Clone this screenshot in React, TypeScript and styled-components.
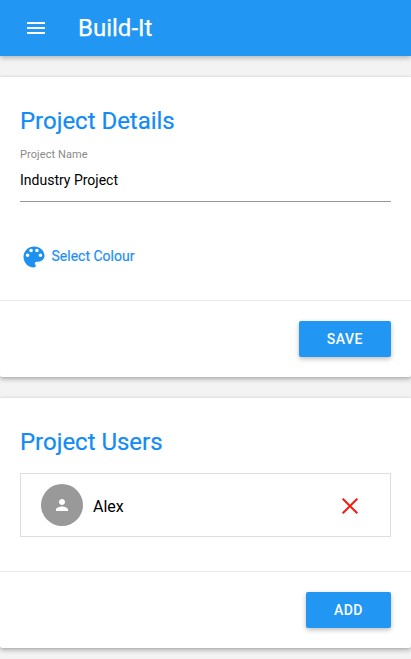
import React from "react";
import styled, { createGlobalStyle } from "styled-components";

const GlobalStyle = createGlobalStyle`
  * { box-sizing: border-box; }
  body {
    margin: 0;
    background: #f3f3f3;
    font-family: Roboto, "Liberation Sans", sans-serif;
    color: #000;
    overflow: hidden;
  }
`;

const Page = styled.div`
  display: flex;
  flex-direction: column;
  gap: 21px;
  height: 659px;
`;

const AppBar = styled.header`
  display: flex;
  align-items: center;
  flex: none;
  gap: 30px;
  height: 56px;
  padding-left: 24px;
  background: #2196f3;
  color: #fff;
  box-shadow: 0 2px 5px rgba(0, 0, 0, 0.26);
`;

const AppTitle = styled.h1`
  margin: 0;
  font-size: 24px;
  line-height: 32px;
  font-weight: 400;
  -webkit-text-stroke: 0.25px currentColor;
`;

const Card = styled.section<{ $height: number }>`
  display: flex;
  flex-direction: column;
  flex: none;
  height: ${(p) => p.$height}px;
  background: #fff;
  border-radius: 0 0 2px 2px;
  box-shadow: 0 2px 5px rgba(0, 0, 0, 0.3), 0 0 2px rgba(0, 0, 0, 0.1);
`;

const CardBody = styled.div`
  flex: 1;
  padding: 28px 20px 0;
`;

const Heading = styled.h2`
  margin: 0;
  font-size: 24px;
  line-height: 32px;
  font-weight: 400;
  letter-spacing: -0.02px;
  color: #118bf5;
  -webkit-text-stroke: 0.2px currentColor;
`;

const Field = styled.label`
  display: block;
  margin-top: 11px;
`;

const FieldLabel = styled.span`
  display: block;
  font-size: 11px;
  line-height: 14px;
  letter-spacing: 0.08px;
  color: #8a8a8a;
`;

const FieldInput = styled.input`
  display: block;
  width: 100%;
  height: 40px;
  padding: 0 0 3px;
  border: 0;
  border-bottom: 1px solid #969696;
  outline: 0;
  background: none;
  font: 400 14px/20px Roboto, sans-serif;
  color: #000;
`;

const ColourButton = styled.button`
  display: flex;
  align-items: center;
  gap: 3.500px;
  height: 28px;
  margin-top: 41px;
  padding: 0;
  border: 0;
  background: none;
  color: #1e90f0;
  font: 400 14px/20px Roboto, sans-serif;
`;

const ColourLabel = styled.span`
  padding-bottom: 2px;
  -webkit-text-stroke: 0.2px currentColor;
`;

const UserRow = styled.div`
  display: flex;
  align-items: center;
  height: 64px;
  margin-top: 15px;
  padding: 0 29px 0 20px;
  border: 1px solid #dedede;
`;

const Avatar = styled.span`
  display: flex;
  align-items: center;
  justify-content: center;
  width: 42px;
  height: 42px;
  border-radius: 50%;
  background: #999;
  color: #fff;
`;

const UserName = styled.span`
  flex: 1;
  margin-left: 10px;
  padding-top: 3px;
  font-size: 16px;
  line-height: 22px;
`;

const RemoveButton = styled.button`
  display: flex;
  padding: 0;
  margin-top: 2px;
  border: 0;
  background: none;
  color: #f51a10;
`;

const CardActions = styled.footer`
  display: flex;
  justify-content: flex-end;
  height: 77px;
  padding: 20px 20px 0;
  border-top: 1px solid #e8e8e8;
`;

const ActionButton = styled.button`
  height: 36px;
  padding: 0 28px;
  border: 0;
  border-radius: 2px;
  background: #2196f3;
  color: #fff;
  font: 500 14px/36px Roboto, sans-serif;
  letter-spacing: 0.5px;
  box-shadow: 0 2px 5px rgba(0, 0, 0, 0.26);
`;

const Icon = styled.svg<{ $size: number }>`
  display: block;
  flex: none;
  width: ${(p) => p.$size}px;
  height: ${(p) => p.$size}px;
  fill: currentColor;
`;

const StrokeIcon = styled(Icon)`
  fill: none;
  stroke: currentColor;
  stroke-width: 2;
`;

export default function App() {
  return (
    <>
      <GlobalStyle />
      <Page>
        <AppBar>
          <Icon $size={24} viewBox="0 0 24 24">
            <path d="M3 18h18v-2H3v2zm0-5h18v-2H3v2zm0-7v2h18V6H3z" />
          </Icon>
          <AppTitle>Build-It</AppTitle>
        </AppBar>

        <Card $height={300}>
          <CardBody>
            <Heading>Project Details</Heading>
            <Field>
              <FieldLabel>Project Name</FieldLabel>
              <FieldInput defaultValue="Industry Project" />
            </Field>
            <ColourButton>
              <Icon $size={28} viewBox="0 0 24 24">
                <path d="M12 3c-4.970 0-9 4.030-9 9s4.030 9 9 9c.83 0 1.500-.67 1.500-1.500 0-.39-.15-.74-.39-1.010-.23-.26-.38-.61-.38-.99 0-.83.67-1.500 1.500-1.500H16c2.760 0 5-2.240 5-5 0-4.420-4.030-8-9-8zm-5.500 9c-.83 0-1.500-.67-1.500-1.500S5.670 9 6.500 9 8 9.670 8 10.500 7.330 12 6.500 12zm3-4C8.670 8 8 7.330 8 6.500S8.670 5 9.500 5s1.500.67 1.500 1.500S10.330 8 9.500 8zm5 0c-.83 0-1.500-.67-1.500-1.500S13.670 5 14.500 5s1.500.67 1.500 1.500S15.330 8 14.500 8zm3 4c-.83 0-1.500-.67-1.500-1.500S16.670 9 17.500 9s1.500.67 1.500 1.500-.67 1.500-1.500 1.500z" />
              </Icon>
              <ColourLabel>Select Colour</ColourLabel>
            </ColourButton>
          </CardBody>
          <CardActions>
            <ActionButton>SAVE</ActionButton>
          </CardActions>
        </Card>

        <Card $height={250}>
          <CardBody>
            <Heading>Project Users</Heading>
            <UserRow>
              <Avatar>
                <Icon $size={18} viewBox="0 0 24 24">
                  <path d="M12 12c2.210 0 4-1.790 4-4s-1.790-4-4-4-4 1.790-4 4 1.790 4 4 4zm0 2c-2.670 0-8 1.340-8 4v2h16v-2c0-2.660-5.330-4-8-4z" />
                </Icon>
              </Avatar>
              <UserName>Alex</UserName>
              <RemoveButton aria-label="Remove Alex">
                <StrokeIcon $size={22} viewBox="0 0 22 22">
                  <path d="M3.700 3.700 18.300 18.300M18.300 3.700 3.700 18.300" />
                </StrokeIcon>
              </RemoveButton>
            </UserRow>
          </CardBody>
          <CardActions>
            <ActionButton>ADD</ActionButton>
          </CardActions>
        </Card>
      </Page>
    </>
  );
}
